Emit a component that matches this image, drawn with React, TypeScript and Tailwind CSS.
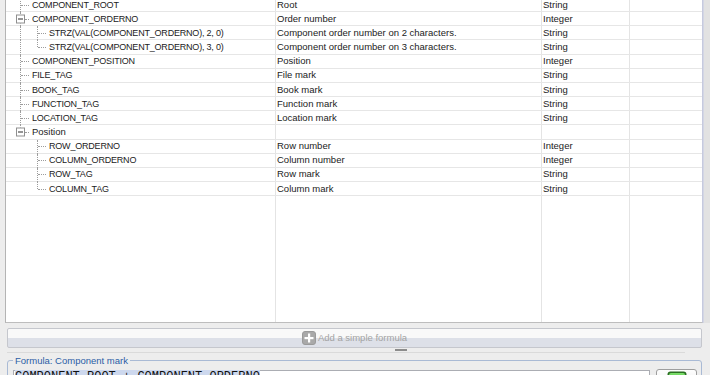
import React from 'react';

type Row = {
  name: string;
  desc: string;
  type: string;
  level: 0 | 1;
  open?: boolean;
  last?: boolean;
  parentHasNext?: boolean;
};

// formula fields tree, scrolled a little so the first row is clipped at the top
const rows: Row[] = [
  { name: 'COMPONENT_ROOT', desc: 'Root', type: 'String', level: 0 },
  { name: 'COMPONENT_ORDERNO', desc: 'Order number', type: 'Integer', level: 0, open: true },
  { name: 'STRZ(VAL(COMPONENT_ORDERNO), 2, 0)', desc: 'Component order number on 2 characters.', type: 'String', level: 1, parentHasNext: true },
  { name: 'STRZ(VAL(COMPONENT_ORDERNO), 3, 0)', desc: 'Component order number on 3 characters.', type: 'String', level: 1, last: true, parentHasNext: true },
  { name: 'COMPONENT_POSITION', desc: 'Position', type: 'Integer', level: 0 },
  { name: 'FILE_TAG', desc: 'File mark', type: 'String', level: 0 },
  { name: 'BOOK_TAG', desc: 'Book mark', type: 'String', level: 0 },
  { name: 'FUNCTION_TAG', desc: 'Function mark', type: 'String', level: 0 },
  { name: 'LOCATION_TAG', desc: 'Location mark', type: 'String', level: 0 },
  { name: 'Position', desc: '', type: '', level: 0, open: true, last: true },
  { name: 'ROW_ORDERNO', desc: 'Row number', type: 'Integer', level: 1 },
  { name: 'COLUMN_ORDERNO', desc: 'Column number', type: 'Integer', level: 1 },
  { name: 'ROW_TAG', desc: 'Row mark', type: 'String', level: 1 },
  { name: 'COLUMN_TAG', desc: 'Column mark', type: 'String', level: 1, last: true },
];

const dot = 'absolute border-dotted border-[#9c9c9c]';

const TreeLines = ({ row }: { row: Row }) => {
  if (row.level === 0) {
    return (
      <>
        <div className={`${dot} left-[14px] top-0 border-l ${row.last ? 'h-1/2' : '-bottom-px'}`} />
        {row.open ? (
          <>
            <div className="absolute left-[10px] top-1/2 -translate-y-1/2 w-[9px] h-[9px] border border-[#8f8f8f] bg-white flex items-center justify-center">
              <div className="w-[5px] h-px bg-[#2d2d2d]" />
            </div>
            <div className={`${dot} left-[19px] top-1/2 w-[4px] border-t`} />
          </>
        ) : (
          <div className={`${dot} left-[15px] top-1/2 w-[8px] border-t`} />
        )}
      </>
    );
  }
  return (
    <>
      {row.parentHasNext && <div className={`${dot} left-[14px] top-0 -bottom-px border-l`} />}
      <div className={`${dot} left-[31px] top-0 border-l ${row.last ? 'h-1/2' : '-bottom-px'}`} />
      <div className={`${dot} left-[32px] top-1/2 w-[8px] border-t`} />
    </>
  );
};

const isCaps = (s: string) => s === s.toUpperCase();

const App = () => {
  return (
    <div className="w-[710px] h-[375px] overflow-hidden bg-[#ededed] flex flex-col font-['Liberation_Sans',Arial,sans-serif] text-[#222]">
      {/* grid */}
      <div className="flex h-[323px] shrink-0">
        <div className="w-[5px] shrink-0" />
        <div className="w-[698px] flex flex-col bg-white border-l border-b border-r border-l-[#b4b4b4] border-b-[#bdbdbd] border-r-[#c6cade] overflow-hidden">
          <div className="-mt-[2px] flex flex-col">
            {rows.map((row) => (
              <div key={row.name} className="flex h-[14.17px] shrink-0 border-b border-[#e6e6e6]">
                <div className="relative w-[270px] shrink-0 border-r border-[#e4e4e4] flex items-center">
                  <TreeLines row={row} />
                  <span
                    className={`whitespace-nowrap leading-[14px] ${row.level === 0 ? 'pl-[26px]' : 'pl-[43px]'} ${
                      isCaps(row.name) ? 'text-[9px] tracking-[-0.2px]' : 'text-[9.5px]'
                    }`}
                  >
                    {row.name}
                  </span>
                </div>
                <div className="w-[266px] shrink-0 border-r border-[#e4e4e4] flex items-center pl-[1px] text-[9.5px] leading-[14px] whitespace-nowrap">
                  {row.desc}
                </div>
                <div className="w-[88px] shrink-0 border-r border-[#e4e4e4] flex items-center pl-[1px] text-[9.5px] leading-[14px]">
                  {row.type}
                </div>
                <div className="flex-1" />
              </div>
            ))}
          </div>
          <div className="flex-1 flex">
            <div className="w-[270px] shrink-0 border-r border-[#e4e4e4]" />
            <div className="w-[266px] shrink-0 border-r border-[#e4e4e4]" />
            <div className="w-[88px] shrink-0 border-r border-[#e4e4e4]" />
            <div className="flex-1" />
          </div>
        </div>
        <div className="w-[7px] shrink-0 border-l border-[#d3d6e4] bg-[#e2e2e2]" />
      </div>

      {/* bottom panel */}
      <div className="flex flex-col pl-[7px] pr-[8px]">
        <button className="mt-[5px] h-[20px] rounded-[2px] border border-[#c5c7cd] bg-[linear-gradient(#f9f9f9_0,#f9f9f9_50%,#dde0e8_50%,#dde0e8_100%)] flex items-center justify-center gap-[2px]">
          <svg width="14" height="14" viewBox="0 0 14 14">
            <rect x="0.5" y="0.5" width="13" height="13" rx="2.5" fill="#a9a9a9" stroke="#9a9a9a" />
            <rect x="6" y="2.5" width="2.2" height="9" fill="#fff" />
            <rect x="2.5" y="6" width="9" height="2.2" fill="#fff" />
          </svg>
          <span className="text-[9.5px] leading-[12px] text-[#a3a3a3]">Add a simple formula</span>
        </button>

        {/* splitter */}
        <div className="mt-[1px] ml-[388px] w-[12px] h-[2px] bg-[#8c8c8c]" />
        <div className="mt-[1px] w-[678px] h-px bg-[#dadada]" />

        <fieldset className="mt-[2px] min-w-0 border border-[#a9bad5] rounded-[3px] pl-[5px] pr-[4px] pt-[3px] h-[40px]">
          <legend className="px-[2px] text-[9.5px] leading-[11px] text-[#2b5da6]">Formula: Component mark</legend>
          <div className="flex items-start gap-[6px]">
            <div className="mt-[1px] flex-1 h-[30px] border border-[#abadb3] bg-white pl-[1px] font-['Liberation_Mono','Courier_New',monospace] text-[12px] leading-[12px] text-[#111] whitespace-nowrap">
              <span className="bg-[#cdd8ee]">COMPONENT_ROOT + COMPONENT_ORDERNO</span>
            </div>
            <div className="w-[41px] h-[30px] rounded-[3px] border border-[#9e9e9e] bg-[linear-gradient(#fdfdfd,#e6e6e6)] flex justify-center pt-[1px]">
              <svg width="20" height="20" viewBox="0 0 20 20">
                <defs>
                  <linearGradient id="gr" x1="0" y1="0" x2="0" y2="1">
                    <stop offset="0" stopColor="#7de06b" />
                    <stop offset="1" stopColor="#1f9a1f" />
                  </linearGradient>
                </defs>
                <rect x="0.5" y="0.5" width="19" height="19" rx="3" fill="#2a6e22" />
                <rect x="2" y="2" width="16" height="16" rx="2" fill="url(#gr)" />
              </svg>
            </div>
          </div>
        </fieldset>
      </div>
    </div>
  );
};

export default App;
